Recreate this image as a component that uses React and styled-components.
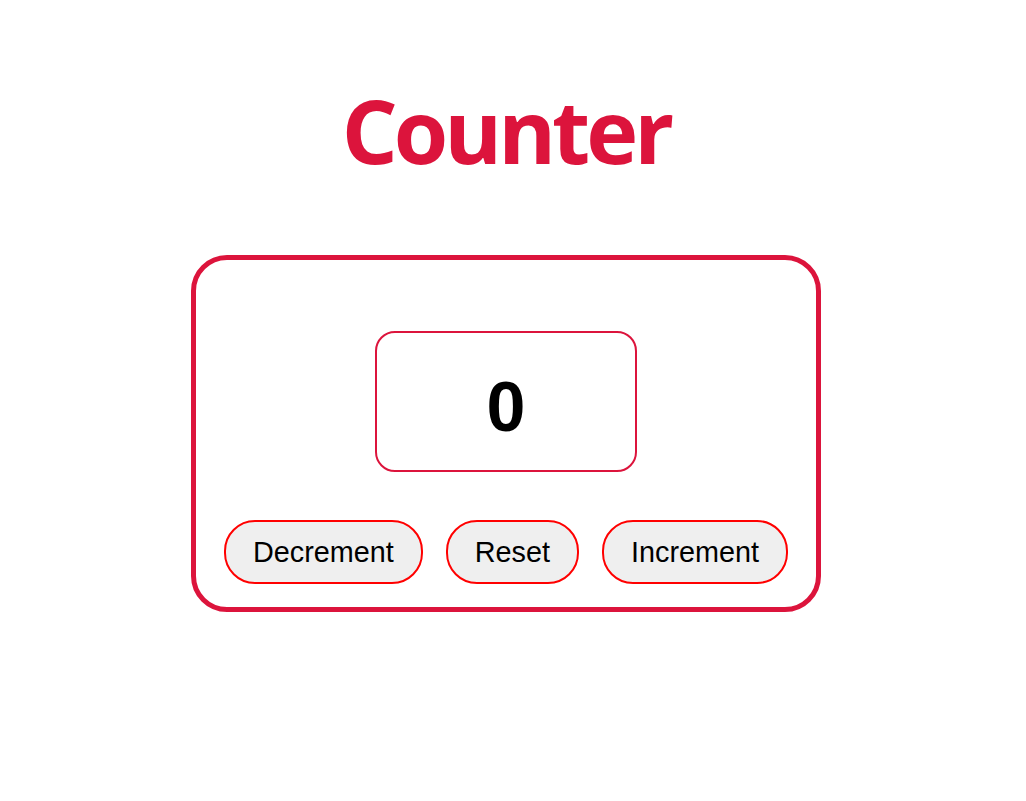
import React, { useState } from 'react'
import styled, { createGlobalStyle } from 'styled-components'

const GlobalStyle = createGlobalStyle`
  body {
    margin: 0;
    background: #fff;
    font-family: "Liberation Sans", Arial, sans-serif;
  }
`

const Page = styled.div`
  display: flex;
  flex-direction: column;
  align-items: center;
  padding-right: 14px;
`

const Title = styled.h1`
  margin: 78px 0 0;
  font-family: "Open Sans", "Noto Sans", sans-serif;
  font-size: 88px;
  font-weight: 700;
  line-height: 1.2;
  letter-spacing: -4px;
  color: #dc143c;
`

const Card = styled.div`
  margin-top: 71px;
  width: 630px;
  box-sizing: border-box;
  border: 5px solid #dc143c;
  border-radius: 36px;
  padding: 71px 29px 23px;
  display: flex;
  flex-direction: column;
  align-items: center;
  gap: 48px;
`

const Display = styled.div`
  width: 262px;
  height: 141px;
  box-sizing: border-box;
  padding-top: 12px;
  border: 2px solid #dc143c;
  border-radius: 20px;
  display: flex;
  align-items: center;
  justify-content: center;
  font-size: 70px;
  font-weight: 700;
  color: #000;
`

const Row = styled.div`
  display: flex;
  justify-content: center;
  gap: 23px;
`

const Button = styled.button`
  font-family: "Liberation Sans", Arial, sans-serif;
  font-size: 28.8px;
  color: #000;
  background: #efefef;
  border: 2px solid #ff0000;
  border-radius: 31px;
  padding: 12px 27px;
  line-height: 36px;
  cursor: pointer;
`

export default function App() {
  const [count, setCount] = useState(0)

  return (
    <>
      <GlobalStyle />
      <Page>
        <Title>Counter</Title>
        <Card>
          <Display>{count}</Display>
          <Row>
            <Button onClick={() => setCount(count - 1)}>Decrement</Button>
            <Button onClick={() => setCount(0)}>Reset</Button>
            <Button onClick={() => setCount(count + 1)}>Increment</Button>
          </Row>
        </Card>
      </Page>
    </>
  )
}
